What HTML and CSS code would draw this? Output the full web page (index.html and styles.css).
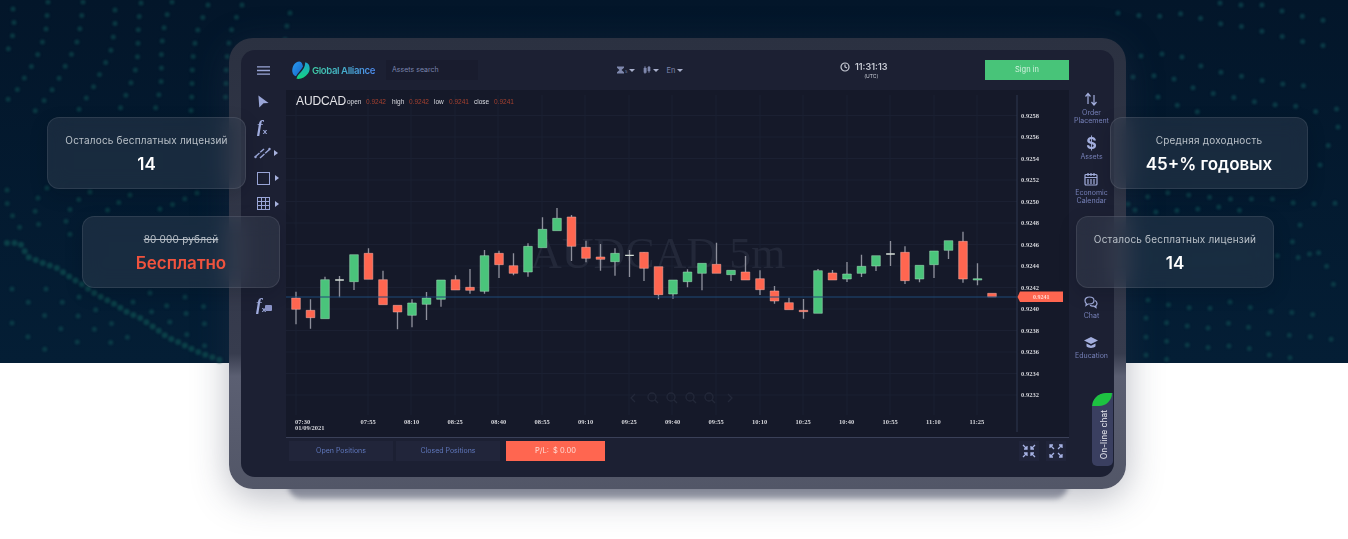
FILE: index.html
```html
<!DOCTYPE html>
<html lang="ru">
<head>
<meta charset="utf-8">
<title>Global Alliance</title>
<link rel="stylesheet" href="styles.css">
</head>
<body>
<div class="page">
  <div class="hero">
    <svg class="dots" viewBox="0 0 1348 363" aria-hidden="true">
      <g class="dot-line">
        <path d="M13 9L14 23L13 34L10 45L3 61"/>
        <path d="M48 2L47 16L46 29L43 40L40 50L36 58L30 69L23 80L17 90L9 98L3 107"/>
        <path d="M83 2L82 14L80 28L78 39L74 50L68 60L63 71L57 82L50 93L43 102L35 111L27 119"/>
        <path d="M115 10L115 25L113 39L111 50L106 62L101 71L96 83L88 95L82 106L74 115"/>
        <path d="M141 3L139 18L138 35L138 50L137 63L134 76L130 85L126 95L121 107L115 117"/>
        <path d="M172 2L167 15L164 28L162 43L161 62L162 76L160 88L158 100L155 110"/>
        <path d="M208 5L203 17L198 29L195 43L193 58L192 75L192 90L191 112"/>
        <path d="M242 5L237 16L232 28L229 42L227 58L226 73L226 87L225 110"/>
        <path d="M290 13L287 25L285 40"/>
        <path d="M7 190L7 203L13 217L20 228"/>
        <path d="M47 188L38 198L35 212L38 223L43 233"/>
        <path d="M90 192L75 202L65 217L68 230L75 245"/>
        <path d="M130 195L115 205L103 213"/>
        <path d="M197 193L167 207L147 213"/>
      </g>
      <g class="dot-band">
        <path d="M7 243L20 243L28 257L43 263L57 268L70 277L83 285L97 295L113 303L127 312L140 318L155 328L167 337L180 343L200 353L226 362"/>
      </g>
      <g class="dot-wide">
        <path d="M12 289L28 302L44 315L60 328L76 341L92 353"/>
        <path d="M12 323L27 336L43 348L59 360"/>
        <path d="M46 289L62 302L78 316L94 329L110 342L125 355"/>
        <path d="M79 297L96 310L112 324L127 337L143 351"/>
        <path d="M133 302L150 311L167 320L183 332L200 343L217 353"/>
        <path d="M150 293L167 306L185 313L203 323L220 333"/>
        <path d="M185 297L200 304L218 317"/>
        <path d="M1118 13L1153 17L1187 13L1213 23L1235 25L1257 30L1277 35L1299 41L1317 43L1340 53"/>
        <path d="M1141 56L1174 53L1198 65L1220 72L1240 76L1260 80L1281 84L1299 84L1321 93"/>
        <path d="M1133 77L1166 75L1190 87L1211 93L1231 97L1251 101L1272 105L1289 104L1312 112L1345 108"/>
        <path d="M1220 3L1242 5L1263 5L1285 12L1306 17L1327 21"/>
        <path d="M1158 97L1181 107L1202 113"/>
        <path d="M1338 127L1328 146L1320 165L1314 183"/>
        <path d="M1128 204L1160 192L1207 197L1231 199L1273 199L1300 204L1341 203"/>
        <path d="M1135 210L1155 212L1185 210L1220 207L1250 212"/>
        <path d="M1148 300L1178 307L1208 309L1230 302L1264 311L1299 313L1333 317"/>
        <path d="M1146 318L1177 325L1209 328L1233 322L1269 334L1303 336L1337 340"/>
        <path d="M1146 337L1179 344L1212 348L1238 345L1276 357L1310 359"/>
        <path d="M1146 355L1180 362"/>
        <path d="M1153 255L1185 263L1208 260L1264 254L1296 258L1330 250"/>
        <path d="M1300 225L1290 240L1332 270L1334 290"/>
      </g>
    </svg>
  </div>

  <div class="slab"></div>

  <div class="device">
    <div class="screen">
      <header class="topbar">
        <svg class="burger" viewBox="0 0 13 9"><path d="M0 .8h13M0 4.500h13M0 8.200h13"/></svg>
        <div class="logo">
          <svg class="logo-mark" viewBox="0 0 18 18">
            <defs>
              <linearGradient id="lg1" x1="0" y1="0" x2="1" y2="1"><stop offset="0" stop-color="#2a9bf0"/><stop offset="1" stop-color="#1465c8"/></linearGradient>
              <linearGradient id="lg2" x1="0" y1="0" x2="0" y2="1"><stop offset="0" stop-color="#1da4d0"/><stop offset="1" stop-color="#14d27d"/></linearGradient>
            </defs>
            <path fill="url(#lg1)" d="M7.500 .5C2.500 .5 0 6 .3 10.500c.2 2.500 2 4.500 3.700 4.800C5.500 12 9 9.500 11 5.500 10.500 3 9.500 .5 7.500 .5z"/>
            <path fill="url(#lg2)" d="M4.500 17.800c4.500.8 8.500-1.500 11.500-5.300 2-2.500 2-6 1-8.500-1-2-2.500-2.800-4-2.500.6 3-1.500 7-4 9.500-1.500 1.500-4 3.500-4.500 6.800z"/>
          </svg>
          <span class="logo-text">Global Alliance</span>
        </div>
        <div class="search">Assets search</div>
        <div class="selectors">
          <span class="sel">
            <svg class="sel-icon" viewBox="0 0 8 8"><path d="M0 .5h7v1.200L4.500 4 7 6.300v1.200H0V6.300L2.500 4 0 1.700z"/></svg><small class="sel-sub">5</small><i class="caret"></i>
          </span>
          <span class="sel sel-candle">
            <svg class="sel-icon" viewBox="0 0 8 8"><path d="M1 2h2.200v4.500H1zM5 1h2v4H5zM2 0v8M6 0v7" stroke="#7f88ae" stroke-width=".7"/></svg><i class="caret"></i>
          </span>
          <span class="sel sel-lang">En<i class="caret"></i></span>
        </div>
        <div class="clock">
          <svg class="clock-icon" viewBox="0 0 10 10"><circle cx="5" cy="5" r="4"/><path d="M5 2.500V5l2 1"/></svg>
          <div class="clock-text"><b>11:31:13</b><small>(UTC)</small></div>
        </div>
        <a class="signin">Sign in</a>
      </header>

      <div class="body">
        <aside class="tools">
          <div class="tool">
            <svg class="tool-icon" viewBox="0 0 12 14"><path class="fill" d="M.5 .5L11.500 8.500L6 9L1.500 13.500z"/></svg>
          </div>
          <div class="tool"><span class="fx">f<sub>x</sub></span></div>
          <div class="tool tool-wide">
            <svg class="tool-icon-lg" viewBox="0 0 17 12"><path class="line line-thick" stroke-dasharray="6 1" d="M1 10L10 2M6 11L16 2"/><circle class="fill" cx="1.500" cy="10" r="1.200"/><circle class="fill" cx="15.500" cy="2" r="1.200"/></svg>
            <i class="tri"></i>
          </div>
          <div class="tool">
            <svg class="tool-icon" viewBox="0 0 13 13"><rect class="line" x=".5" y=".5" width="12" height="12"/></svg><i class="tri"></i>
          </div>
          <div class="tool">
            <svg class="tool-icon" viewBox="0 0 13 13"><rect class="line" x=".5" y=".5" width="12" height="12"/><path class="line" d="M4.500 .5v12M8.500 .5v12M.5 4.500h12M.5 8.500h12"/></svg><i class="tri"></i>
          </div>
          <div class="tool tool-gap"><span class="fx">f<sub>x</sub></span><svg class="fx-box" viewBox="0 0 7 6"><rect width="7" height="6" rx="1"/></svg></div>
        </aside>

        <main class="center">
          <svg class="chart" viewBox="286 90 783 347">
            <g class="grid">
              <path d="M286 115.500H1017M286 137H1017M286 158.500H1017M286 180H1017M286 201.500H1017M286 223H1017M286 244.500H1017M286 266H1017M286 287.500H1017M286 309H1017M286 330.500H1017M286 352H1017M286 373.500H1017M286 395H1017"/>
              <path d="M296 95V415M368 95V415M411 95V415M455 95V415M498 95V415M542 95V415M585 95V415M629 95V415M672 95V415M716 95V415M760 95V415M803 95V415M847 95V415M890 95V415M934 95V415M977 95V415"/>
            </g>
            <text class="watermark" x="530" y="268">AUDCAD 5m</text>
            <g class="nav">
              <path d="M635 394l-4 4 4 4M728 394l4 4-4 4"/>
              <circle cx="652" cy="397" r="4"/><path d="M655 400l3 3"/>
              <circle cx="671" cy="397" r="4"/><path d="M674 400l3 3"/>
              <circle cx="690" cy="397" r="4"/><path d="M693 400l3 3"/>
              <circle cx="709" cy="397" r="4"/><path d="M712 400l3 3"/>
            </g>
            <g transform="translate(0 200) scale(.33333)">
              <path class="wick" d="M888 275V373M931.500 298V386M975 230V239M1018.500 228V292M1062 245V270M1105.500 145V160M1149 212V239M1192.500 336V388M1236 298V382M1279.500 276V360M1323 298V320M1366.500 226V239M1410 207V281M1453.500 150V281M1497 152V234M1540.500 160V226M1584 130V230M1627.500 52V88M1671 24V55M1714.500 45V183M1758 122V187M1801.500 132V212M1845 145V227M1888.500 150V231M1932 157V243M1975.500 284V298M2019 282V296M2062.500 208V262M2106 220V271M2149.500 128V193M2193 224V243M2236.500 168V216M2280 211V285M2323.500 258V311M2367 293V308M2410.500 297V356M2454 207V212M2497.500 210V219M2541 186V246M2584.500 164V231M2628 198V213M2671.500 123V198M2715 139V252M2758.500 237V247M2802 194V234M2845.500 151V177M2889 95V248M2932.500 190V256"/>
              <path class="red" d="M875 294h26v34h-26zM918.500 331h26v22h-26zM1092.500 160h26v78h-26zM1136 239h26v75h-26zM1179.500 316h26v20h-26zM1353.500 239h26v31h-26zM1397 262h26v9h-26zM1484 160h26v34h-26zM1527.500 197h26v23h-26zM1701.500 51h26v88h-26zM1745 142h26v33h-26zM1788.500 171h26v7h-26zM1919 157h26v48h-26zM1962.500 200h26v84h-26zM2136.500 193h26v27h-26zM2223.500 216h26v24h-26zM2267 236h26v33h-26zM2310.500 273h26v30h-26zM2354 308h26v21h-26zM2397.500 331h26v4h-26zM2484.500 219h26v21h-26zM2702 157h26v85h-26zM2876 124h26v113h-26zM2963 280h26v11h-26z"/>
              <path class="green" d="M962 239h26v117h-26zM1049 164h26v81h-26zM1223 309h26v37h-26zM1266.500 294h26v19h-26zM1310 240h26v58h-26zM1440.500 167h26v107h-26zM1571 139h26v77h-26zM1614.500 88h26v55h-26zM1658 55h26v37h-26zM1832 160h26v25h-26zM2006 240h26v42h-26zM2049.500 216h26v29h-26zM2093 190h26v30h-26zM2180 211h26v13h-26zM2441 212h26v128h-26zM2528 222h26v15h-26zM2571.500 199h26v21h-26zM2615 167h26v31h-26zM2745.500 196h26v41h-26zM2789 153h26v41h-26zM2832.500 122h26v29h-26zM2919.500 236h26v4h-26z"/>
              <path class="doji" d="M1005.500 238h26v4h-26zM1875.500 164h26v4h-26zM2658.500 160h26v4h-26z"/>
            </g>
            <path class="price-line" d="M286 297H1017"/>
            <path class="axis" d="M1017 95V432"/>
            <path class="price-tag" d="M1020 291.500H1063V302H1020L1017.500 297z"/>
            <text class="price-text" x="1033" y="299">0.9241</text>

            <text class="sym" x="296" y="104.500">AUDCAD</text>
            <text class="ohlc" x="347" y="104">open</text><text class="ohlc-v" x="366" y="104">0.9242</text>
            <text class="ohlc" x="392" y="104">high</text><text class="ohlc-v" x="409" y="104">0.9242</text>
            <text class="ohlc" x="434" y="104">low</text><text class="ohlc-v" x="449" y="104">0.9241</text>
            <text class="ohlc" x="474" y="104">close</text><text class="ohlc-v" x="494" y="104">0.9241</text>

            <g class="ylab">
              <text x="1021" y="117.500">0.9258</text><text x="1021" y="139">0.9256</text><text x="1021" y="160.500">0.9254</text><text x="1021" y="182">0.9252</text><text x="1021" y="203.500">0.9250</text><text x="1021" y="225">0.9248</text><text x="1021" y="246.500">0.9246</text><text x="1021" y="268">0.9244</text><text x="1021" y="289.500">0.9242</text><text x="1021" y="311">0.9240</text><text x="1021" y="332.500">0.9238</text><text x="1021" y="354">0.9236</text><text x="1021" y="375.500">0.9234</text><text x="1021" y="397">0.9232</text>
            </g>
            <g class="xlab">
              <text x="295" y="424">07:30</text><text x="295" y="430">01/09/2021</text><text x="360.500" y="424">07:55</text><text x="404" y="424">08:10</text><text x="447.500" y="424">08:25</text><text x="491" y="424">08:40</text><text x="534.500" y="424">08:55</text><text x="578" y="424">09:10</text><text x="621.500" y="424">09:25</text><text x="665" y="424">09:40</text><text x="708.500" y="424">09:55</text><text x="752" y="424">10:10</text><text x="795.500" y="424">10:25</text><text x="839" y="424">10:40</text><text x="882.500" y="424">10:55</text><text x="926" y="424">11:10</text><text x="969.500" y="424">11:25</text>
            </g>
          </svg>
          <div class="positions">
            <a class="tab">Open Positions</a>
            <a class="tab">Closed Positions</a>
            <a class="pl">P/L:&nbsp; $ 0.00</a>
            <div class="expand">
              <span class="exp-btn"><svg class="exp-icon" viewBox="0 0 14 14"><path d="M1 1l4 4M5 2v3H2M13 1L9 5M9 2v3h3M1 13l4-4M5 12V9H2M13 13L9 9M9 12V9h3"/></svg></span>
              <span class="exp-btn"><svg class="exp-icon" viewBox="0 0 14 14"><path d="M5 5L1 1M1 4V1h3M9 5l4-4M10 1h3v3M5 9l-4 4M1 10v3h3M9 9l4 4M13 10v3h-3"/></svg></span>
            </div>
          </div>
        </main>

        <aside class="side">
          <div class="side-item side-first">
            <svg class="side-icon" viewBox="0 0 14 14"><path d="M4 12V2M1.500 4.500L4 1.500l2.500 3M10 3v10M7.500 10l2.500 3 2.500-3"/></svg>
            <span>Order<br>Placement</span>
          </div>
          <div class="side-item">
            <span class="dollar">$</span>
            <span>Assets</span>
          </div>
          <div class="side-item">
            <svg class="side-icon" viewBox="0 0 14 14"><rect x="1" y="2.500" width="12" height="10.500" rx="1"/><path d="M1 5.500h12M4 1v3M7 1v3M10 1v3M4 7v5M7 7v5M10 7v5"/></svg>
            <span>Economic<br>Calendar</span>
          </div>
          <div class="side-item side-chat">
            <svg class="side-icon side-solid" viewBox="0 0 14 13"><path d="M5.500 1C8 1 10 2.400 10 4.500S8 8 5.500 8H4L2 9.500 2.300 7.500C1.500 6.800 1 5.700 1 4.500 1 2.400 3 1 5.500 1z"/><path d="M11 4.500c1.200.6 2 1.600 2 2.900 0 1-.5 1.800-1.200 2.400l.2 1.700-2-1.300H8.500C7.500 10.200 6.700 9.800 6 9.300"/></svg>
            <span>Chat</span>
          </div>
          <div class="side-item side-edu">
            <svg class="side-icon side-fill" viewBox="0 0 14 12"><path d="M7 0l7 3.500L7 7 0 3.500z"/><path d="M2.500 6.500v2.800C4 11.500 10 11.500 11.500 9.300V6.500L7 8.700z"/></svg>
            <span>Education</span>
          </div>
          <div class="chat-tab"><span class="chat-text">On-line chat</span></div>
        </aside>
      </div>
    </div>
  </div>

  <div class="card card-a">
    <p class="card-label">Осталось бесплатных лицензий</p>
    <p class="card-value">14</p>
  </div>
  <div class="card card-b">
    <p class="card-label card-strike">80 000 рублей</p>
    <p class="card-value card-free">Бесплатно</p>
  </div>
  <div class="card card-c">
    <p class="card-label">Средняя доходность</p>
    <p class="card-value">45+% годовых</p>
  </div>
  <div class="card card-d">
    <p class="card-label">Осталось бесплатных лицензий</p>
    <p class="card-value">14</p>
  </div>
</div>
</body>
</html>
```
FILE: styles.css
```css
* { box-sizing: border-box; }
html, body { margin: 0; background: #fff; }
body { font-family: Inter, "Liberation Sans", sans-serif; }

.page {
  position: relative;
  width: 1348px;
  height: 539px;
  overflow: hidden;
  padding: 38px 0 0 229px;
}

/* hero band */
.hero {
  position: absolute;
  left: 0; top: 0;
  width: 100%;
  height: 363px;
  background: linear-gradient(#03162a, #041e35);
}
.dots { display: block; width: 100%; height: 100%; fill: none; stroke-linecap: round; filter: blur(1px); }
.dot-line path { stroke: #0a3842; stroke-width: 5; stroke-dasharray: 0 13.500; }
.dot-band path { stroke: #0b4048; stroke-width: 6; stroke-dasharray: 0 7.500; }
.dot-wide path { stroke: #0b3a46; stroke-width: 5; stroke-dasharray: 0 21; }

/* slab under the tablet */
.slab {
  position: absolute;
  left: 288px; top: 470px;
  width: 780px; height: 29px;
  border-radius: 0 0 14px 14px;
  background: linear-gradient(#73778a, #b0b3bd);
  filter: blur(2.500px);
}

/* tablet */
.device {
  position: relative;
  width: 897px;
  height: 451px;
  padding: 12px;
  border-radius: 24px;
  background: linear-gradient(#2b3141 0, #373c4e 70%, #5b5f72 75%, #525667 100%);
  box-shadow: 0 8px 36px rgba(50, 55, 80, .34);
}
.screen {
  display: flex;
  flex-direction: column;
  width: 873px;
  height: 427px;
  border-radius: 14px;
  overflow: hidden;
  background: #1c2033;
  filter: blur(.3px);
}

/* top bar */
.topbar {
  display: flex;
  align-items: center;
  flex: none;
  height: 40px;
  padding-left: 16px;
}
.burger { width: 13px; height: 9px; flex: none; fill: none; stroke: #9aa6d8; stroke-width: 1.300; }
.logo { display: flex; align-items: center; gap: 2px; margin-left: 22px; width: 94px; flex: none; }
.logo-mark { width: 18px; height: 18px; flex: none; }
.logo-text {
  font-size: 9.600px;
  font-weight: 600;
  letter-spacing: -.42px;
  white-space: nowrap;
  background: linear-gradient(90deg, #3fd0a8, #4d8bf0);
  -webkit-background-clip: text;
  background-clip: text;
  color: transparent;
}
.search {
  flex: none;
  width: 92px; height: 20px;
  padding-left: 6px;
  margin-right: 139px;
  background: #191c2e;
  color: #7a84ad;
  font-size: 7px;
  line-height: 20px;
}
.selectors { display: flex; align-items: center; flex: none; width: 223px; color: #7f88ae; font-size: 7.500px; }
.sel { display: flex; align-items: center; }
.sel-candle { margin-left: 8px; }
.sel-lang { margin-left: 7px; }
.sel-icon { width: 8px; height: 8px; fill: #7f88ae; }
.sel-sub { font-size: 4px; align-self: flex-end; }
.caret {
  display: block;
  margin-left: 2px;
  border: 3px solid transparent;
  border-top: 3.500px solid #a8afcc;
  border-bottom: 0;
}
.clock { display: flex; align-items: flex-start; gap: 5px; flex: none; width: 145px; }
.clock-icon { width: 10px; height: 10px; margin-top: 1px; fill: none; stroke: #c9ccd6; stroke-width: 1.200; }
.clock-text { display: flex; flex-direction: column; align-items: center; color: #c9ccd6; }
.clock-text b { font-size: 9px; font-weight: 600; line-height: 12px; }
.clock-text small { font-size: 5px; line-height: 6px; }
.signin {
  flex: none;
  width: 84px; height: 20px;
  background: #48c479;
  color: #d6f1e1;
  font-size: 7.500px;
  line-height: 20px;
  text-align: center;
}

.body { display: flex; flex: 1; min-height: 0; }

/* left tools */
.tools { flex: none; width: 45px; padding: 0 0 0 16px; margin-top: -1px; color: #9aa6d8; }
.tool { display: flex; align-items: center; gap: 5px; height: 25.500px; }
.tool-wide { margin-left: -3px; gap: 3px; }
.tool-gap { margin: 76px 0 0 -1px; gap: 0; }
.tool-icon { width: 13px; height: 13px; }
.tool-icon-lg { width: 17px; height: 12px; }
.tool .line { fill: none; stroke: #9aa6d8; stroke-width: 1; }
.tool .line-thick { stroke-width: 1.400; }
.tool .fill { fill: #9aa6d8; }
.tri { display: block; border: 3.500px solid transparent; border-left: 4px solid #a7b2de; border-right: 0; }
.fx {
  font-family: "Liberation Serif", serif;
  font-style: italic;
  font-weight: 700;
  font-size: 17px;
  line-height: 1;
  color: #a2aee0;
}
.fx sub {
  font-family: "Liberation Sans", sans-serif;
  font-size: 8px;
  font-weight: 700;
  font-style: normal;
  vertical-align: -2px;
}
.fx-box { width: 7px; height: 6px; margin: 5px 0 0 -1px; fill: #8b94c8; }

/* chart column */
.center { display: flex; flex-direction: column; flex: none; width: 783px; }
.chart { display: block; flex: none; width: 783px; height: 347px; background: #151929; }
.grid path { fill: none; stroke: #1b2032; stroke-width: 1; }
.watermark { font-family: "Liberation Serif", serif; font-size: 44px; fill: #232839; }
.nav path, .nav circle { fill: none; stroke: #232839; stroke-width: 1.300; }
.wick { fill: none; stroke: #8d8f9b; stroke-width: 4; }
.red { fill: #ff6650; stroke: #f7b3a8; stroke-width: 1.500; }
.green { fill: #4ac47b; stroke: #a7e0bf; stroke-width: 1.500; }
.doji { fill: #d6e0d8; }
.price-line { fill: none; stroke: #1f4a78; stroke-width: 1; }
.axis { fill: none; stroke: #2e3850; stroke-width: 1; }
.price-tag { fill: #ff6650; }
.price-text { font-family: "Liberation Serif", serif; font-size: 6px; font-weight: 700; fill: #ffd9d2; }
.sym { font-family: "Liberation Sans", sans-serif; font-size: 12px; letter-spacing: -.1px; fill: #e4e4e8; }
.ohlc { font-family: "Liberation Sans", sans-serif; font-size: 6.500px; fill: #dcdde3; }
.ohlc-v { font-family: "Liberation Sans", sans-serif; font-size: 6.500px; fill: #a5402f; }
.ylab text, .xlab text { font-family: "Liberation Serif", serif; font-size: 6.500px; font-weight: 700; fill: #d4d5da; }

/* positions bar */
.positions {
  display: flex;
  align-items: flex-start;
  flex: 1;
  padding: 3px 3px 0;
  border-top: 1px solid #3a4058;
}
.tab {
  flex: none;
  width: 104px; height: 20px;
  margin-right: 3px;
  background: #21253a;
  color: #6078bd;
  font-size: 7px;
  line-height: 20px;
  text-align: center;
}
.tab + .tab { margin-right: 6px; }
.pl {
  flex: none;
  width: 99px; height: 20px;
  background: #ff6650;
  color: #ffdcd5;
  font-size: 7.500px;
  line-height: 20px;
  text-align: center;
}
.expand { display: flex; gap: 7px; margin-left: auto; }
.exp-btn { display: flex; align-items: center; justify-content: center; width: 20px; height: 20px; background: #20243a; }
.exp-icon { width: 14px; height: 14px; fill: none; stroke: #a6b2e4; stroke-width: 1.300; }

/* right tools */
.side {
  display: flex;
  flex-direction: column;
  align-items: center;
  flex: none;
  width: 45px;
  padding-bottom: 11px;
}
.side-item {
  display: flex;
  flex-direction: column;
  align-items: center;
  gap: 3px;
  margin-top: 11px;
  color: #7680b8;
  font-size: 7px;
  line-height: 8px;
  text-align: center;
}
.side-first { margin-top: 2px; }
.side-chat { margin-top: 91px; }
.side-edu { margin-top: 17px; }
.side-icon { width: 14px; height: 14px; fill: none; stroke: #a3aedd; stroke-width: 1.200; }
.side-solid { height: 13px; }
.side-fill { height: 12px; fill: #a3aedd; stroke: none; }
.dollar { font-size: 16px; font-weight: 700; line-height: 14px; color: #a3aedd; }
.chat-tab {
  position: relative;
  display: flex;
  align-items: center;
  justify-content: center;
  align-self: flex-end;
  width: 21px;
  height: 73px;
  margin: auto 1px 0 0;
  padding: 10px 0 0 3px;
  border-radius: 14px 0 5px 5px;
  background: #3a3f60;
  overflow: hidden;
}
.chat-tab::before {
  content: "";
  position: absolute;
  left: 0; top: 0;
  width: 20px; height: 13px;
  border-radius: 16px 0 16px 0;
  background: #1dc241;
}
.chat-text {
  writing-mode: vertical-rl;
  transform: rotate(180deg);
  color: #e8e9ef;
  font-size: 8.500px;
  white-space: nowrap;
}

/* floating glass cards */
.card {
  position: absolute;
  width: 199px;
  height: 72px;
  padding-top: 15px;
  border: 1px solid rgba(255, 255, 255, .09);
  border-radius: 12px;
  background: rgba(72, 84, 100, .3);
  -webkit-backdrop-filter: blur(10px);
  backdrop-filter: blur(10px);
  box-shadow: 0 6px 18px rgba(0, 10, 20, .18);
  text-align: center;
  overflow: hidden;
}
.card-a { left: 47px; top: 117px; }
.card-b { left: 82px; top: 216px; width: 198px; }
.card-c { left: 1110px; top: 117px; width: 198px; }
.card-d { left: 1076px; top: 216px; width: 198px; }
.card-label {
  margin: 0;
  color: #b9c0c8;
  font-size: 10px;
  line-height: 14px;
  letter-spacing: .2px;
}
.card-strike { text-decoration: line-through; }
.card-value {
  margin: 6px 0 0;
  color: #fff;
  font-size: 17px;
  font-weight: 600;
  line-height: 22px;
}
.card-free { color: #f0533e; }
```
